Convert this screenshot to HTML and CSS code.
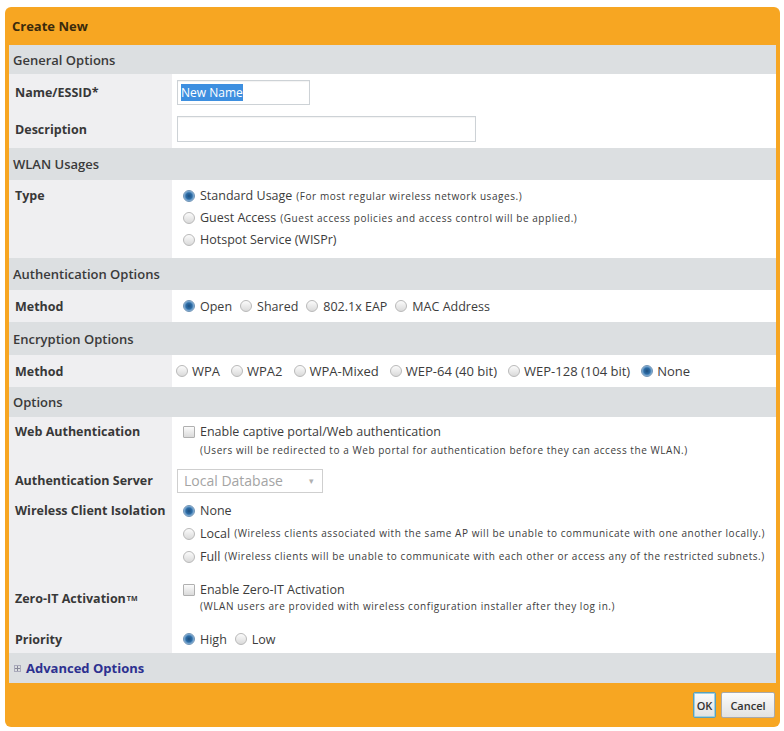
FILE: index.html
```html
<!DOCTYPE html>
<html lang="en">
<head>
    <meta charset="UTF-8">
    <meta name="viewport" content="width=device-width, initial-scale=1.0">
    <title>Create New WLAN</title>
    <link rel="stylesheet" href="styles.css">
</head>
<body>
    <div class="dialog">
        <div class="title">Create New</div>
        <div class="body">
            <div class="section h29">General Options</div>
            <div class="row h36">
                <div class="label">Name/ESSID*</div>
                <div class="field"><div class="textbox short"><span class="selected">New Name</span></div></div>
            </div>
            <div class="row h38">
                <div class="label">Description</div>
                <div class="field"><div class="textbox long"></div></div>
            </div>

            <div class="section h32">WLAN Usages</div>
            <div class="row h78 multi">
                <div class="label top">Type</div>
                <div class="field lines">
                    <label><input type="radio" name="usage" checked>Standard Usage <small>(For most regular wireless network usages.)</small></label>
                    <label><input type="radio" name="usage">Guest Access <small>(Guest access policies and access control will be applied.)</small></label>
                    <label><input type="radio" name="usage">Hotspot Service (WISPr)</label>
                </div>
            </div>

            <div class="section h32">Authentication Options</div>
            <div class="row h32">
                <div class="label">Method</div>
                <div class="field inline">
                    <label><input type="radio" name="auth" checked>Open</label>
                    <label><input type="radio" name="auth">Shared</label>
                    <label><input type="radio" name="auth">802.1x EAP</label>
                    <label><input type="radio" name="auth">MAC Address</label>
                </div>
            </div>

            <div class="section h33">Encryption Options</div>
            <div class="row h32">
                <div class="label">Method</div>
                <div class="field inline tight">
                    <label><input type="radio" name="enc">WPA</label>
                    <label><input type="radio" name="enc">WPA2</label>
                    <label><input type="radio" name="enc">WPA-Mixed</label>
                    <label><input type="radio" name="enc">WEP-64 (40 bit)</label>
                    <label><input type="radio" name="enc">WEP-128 (104 bit)</label>
                    <label><input type="radio" name="enc" checked>None</label>
                </div>
            </div>

            <div class="section h30">Options</div>
            <div class="row h48 webauth">
                <div class="label top">Web Authentication</div>
                <div class="field lines">
                    <label><input type="checkbox">Enable captive portal/Web authentication</label>
                    <div class="note">(Users will be redirected to a Web portal for authentication before they can access the WLAN.)</div>
                </div>
            </div>
            <div class="row h31">
                <div class="label">Authentication Server</div>
                <div class="field"><div class="select">Local Database<span class="arrow">&#9662;</span></div></div>
            </div>
            <div class="row h76 isolation">
                <div class="label top">Wireless Client Isolation</div>
                <div class="field lines">
                    <label><input type="radio" name="iso" checked>None</label>
                    <label><input type="radio" name="iso">Local <small>(Wireless clients associated with the same AP will be unable to communicate with one another locally.)</small></label>
                    <label><input type="radio" name="iso">Full <small>(Wireless clients will be unable to communicate with each other or access any of the restricted subnets.)</small></label>
                </div>
            </div>
            <div class="row h53 zeroit">
                <div class="label">Zero-IT Activation<sup>TM</sup></div>
                <div class="field lines">
                    <label><input type="checkbox">Enable Zero-IT Activation</label>
                    <div class="note">(WLAN users are provided with wireless configuration installer after they log in.)</div>
                </div>
            </div>
            <div class="row h28">
                <div class="label">Priority</div>
                <div class="field inline">
                    <label><input type="radio" name="prio" checked>High</label>
                    <label><input type="radio" name="prio">Low</label>
                </div>
            </div>

            <div class="section h30 advanced"><span class="plus"></span><a href="#">Advanced Options</a></div>
        </div>
        <div class="footer">
            <button class="ok">OK</button>
            <button>Cancel</button>
        </div>
    </div>
</body>
</html>
```

FILE: styles.css
```css
/* General styles */
body {
    margin: 0;
    padding: 0;
    background-color: #fff;
    font-family: "Open Sans", "Noto Sans", sans-serif;
    font-size: 12.5px;
    color: #3c3c3c;
}

.dialog {
    width: 775px;
    margin: 7px 0 0 5px;
    background-color: #f7a622;
    border-radius: 6px;
}

.title {
    height: 38px;
    display: flex;
    align-items: center;
    padding-left: 7px;
    font-weight: bold;
    font-size: 13px;
    color: #3a2a0c;
}

.body {
    margin: 0 4px;
    background-color: #fff;
}

/* section headers */
.section {
    display: flex;
    align-items: center;
    padding-left: 4px;
    background-color: #dcdfe1;
    font-weight: 600;
    font-size: 13px;
    color: #3a3a3a;
}

/* form rows */
.row {
    display: flex;
}

.row .label {
    width: 163px;
    flex-shrink: 0;
    box-sizing: border-box;
    padding-left: 6px;
    display: flex;
    align-items: center;
    white-space: nowrap;
    background-color: #efeff1;
    font-weight: bold;
    color: #383838;
}

.row .label.top {
    align-items: flex-start;
}

.row .field {
    flex: 1;
    display: flex;
    align-items: center;
    padding-left: 5px;
    background-color: #fff;
}

.h28 { height: 28px; }
.h29 { height: 29px; }
.h30 { height: 30px; }
.h31 { height: 31px; }
.h32 { height: 32px; }
.h33 { height: 33px; }
.h36 { height: 36px; }
.h38 { height: 38px; }
.h48 { height: 48px; }
.h53 { height: 53px; }
.h76 { height: 76px; }
.h78 { height: 78px; }

.field.inline {
    padding-left: 11px;
}

.field.inline label {
    margin-right: 8px;
    display: flex;
    align-items: center;
}

.field.inline.tight {
    padding-left: 4px;
    font-size: 13px;
}

.field.inline.tight label {
    margin-right: 11px;
}

.field.inline.tight input {
    margin-right: 4px;
}

.field.lines {
    flex-direction: column;
    align-items: flex-start;
    padding-left: 11px;
}

.field.lines label {
    display: flex;
    align-items: center;
}

.field small,
.note {
    font-size: 10px;
    letter-spacing: 0.55px;
}

.field small {
    margin-left: 4px;
}

.note {
    padding-left: 17px;
}

/* Type row */
.multi .label,
.multi .field {
    padding-top: 5px;
    line-height: 22px;
}

/* Web authentication row */
.webauth .label,
.webauth .field {
    padding-top: 6px;
    line-height: 18px;
}

/* Client isolation row */
.isolation .label,
.isolation .field {
    padding-top: 3px;
    line-height: 23px;
}

.zeroit .field {
    padding-top: 9px;
    line-height: 17px;
}

.zeroit sup {
    font-size: 7px;
    margin-left: 1px;
}

/* controls */
input[type="radio"],
input[type="checkbox"] {
    appearance: none;
    -webkit-appearance: none;
    width: 12px;
    height: 12px;
    margin: 0 5px 0 0;
    flex-shrink: 0;
    border: 1px solid #b9b9b9;
    background: linear-gradient(#fbfbfb, #dadada);
}

input[type="radio"] {
    border-radius: 50%;
}

input[type="radio"]:checked {
    border-color: #6f93b5;
    background: radial-gradient(circle, #1d4d7c 0, #2c6ca6 3px, #8bb5da 5px, #dfe9f2 6px);
}

input[type="checkbox"] {
    border-radius: 1px;
    border-color: #b0b0b0;
}

.textbox {
    height: 25px;
    box-sizing: border-box;
    border: 1px solid #cdd2d6;
    box-shadow: inset 0 1px 1px rgba(0, 0, 0, 0.05);
    padding: 0 3px;
    display: flex;
    align-items: center;
    background-color: #fff;
}

.textbox.short {
    width: 133px;
    font-size: 12px;
}

.textbox.long {
    width: 299px;
    height: 26px;
}

.selected {
    background-color: #3d8fe0;
    color: #fff;
    padding: 1px 0;
    line-height: 15px;
}

.select {
    width: 146px;
    height: 24px;
    box-sizing: border-box;
    border: 1px solid #cfcfcf;
    padding: 0 0 0 6px;
    display: flex;
    align-items: center;
    justify-content: space-between;
    color: #a4a4a4;
    font-size: 14px;
}

.select .arrow {
    font-size: 9px;
    color: #b0b0b0;
    margin-right: 8px;
}

/* advanced link */
.advanced {
    padding-left: 5px;
}

.advanced .plus {
    width: 7px;
    height: 7px;
    margin-right: 5px;
    border: 1px solid #aab;
    box-sizing: border-box;
    background:
        linear-gradient(#889, #889) center / 5px 1px no-repeat,
        linear-gradient(#889, #889) center / 1px 5px no-repeat;
}

.advanced a {
    color: #2d3190;
    font-weight: bold;
    font-size: 13px;
    text-decoration: none;
}

/* footer */
.footer {
    height: 44px;
    display: flex;
    justify-content: flex-end;
    align-items: center;
    gap: 5px;
    padding-right: 5px;
}

.footer button {
    height: 26px;
    padding: 0 6px;
    border: 1px solid #a9a9a9;
    border-radius: 2px;
    background: linear-gradient(#fbfbfb, #e2e2e2);
    font-family: "Open Sans", "Noto Sans", sans-serif;
    font-size: 11px;
    font-weight: 600;
    color: #333;
}

.footer button.ok {
    width: 23px;
    padding: 0;
    border-color: #5aa0bc;
    box-shadow: inset 0 0 0 1px #9fd0e2;
}

.footer button + button {
    width: 54px;
}
```
